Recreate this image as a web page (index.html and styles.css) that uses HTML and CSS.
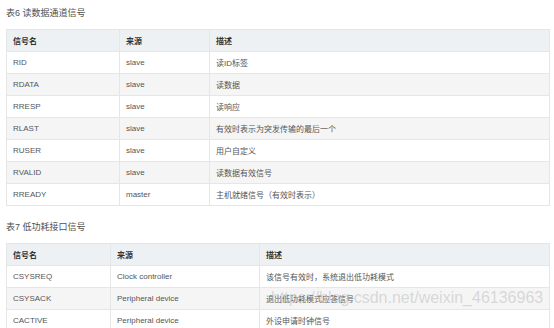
FILE: index.html
```html
<!DOCTYPE html>
<html lang="zh-CN">
<head>
  <meta charset="UTF-8" />
  <title>读数据通道信号</title>
  <link rel="stylesheet" href="styles.css">
</head>
<body>
  <p class="caption caption-first">表6 读数据通道信号</p>
  <table class="sig-table t6">
    <colgroup>
      <col class="c-name" />
      <col class="c-src" />
      <col />
    </colgroup>
    <thead>
      <tr><th>信号名</th><th>来源</th><th>描述</th></tr>
    </thead>
    <tbody>
      <tr><td>RID</td><td>slave</td><td>读ID标签</td></tr>
      <tr><td>RDATA</td><td>slave</td><td>读数据</td></tr>
      <tr><td>RRESP</td><td>slave</td><td>读响应</td></tr>
      <tr><td>RLAST</td><td>slave</td><td>有效时表示为突发传输的最后一个</td></tr>
      <tr><td>RUSER</td><td>slave</td><td>用户自定义</td></tr>
      <tr><td>RVALID</td><td>slave</td><td>读数据有效信号</td></tr>
      <tr><td>RREADY</td><td>master</td><td>主机就绪信号（有效时表示）</td></tr>
    </tbody>
  </table>

  <p class="caption">表7 低功耗接口信号</p>
  <table class="sig-table t7">
    <colgroup>
      <col class="c-name" />
      <col class="c-src" />
      <col />
    </colgroup>
    <thead>
      <tr><th>信号名</th><th>来源</th><th>描述</th></tr>
    </thead>
    <tbody>
      <tr><td>CSYSREQ</td><td>Clock controller</td><td>该信号有效时，系统退出低功耗模式</td></tr>
      <tr><td>CSYSACK</td><td>Peripheral device</td><td>退出低功耗模式应答信号</td></tr>
      <tr><td>CACTIVE</td><td>Peripheral device</td><td>外设申请时钟信号</td></tr>
    </tbody>
  </table>

  <div class="watermark">https://blog.csdn.net/weixin_46136963</div>
</body>
</html>
```

FILE: styles.css
```css
body {
  margin: 0;
  padding: 0 4px 0 6px;
  background: #fff;
  font-family: "Liberation Sans", "Noto Sans CJK SC", sans-serif;
  color: #4d4d4d;
  height: 328px;
  overflow: hidden;
  position: relative;
}

.caption {
  font-size: 9px;
  line-height: 14px;
  margin: 14px 0 9px;
  color: #4f4f4f;
}

.caption-first {
  margin-top: 6px;
}

.sig-table {
  width: 544px;
  border-collapse: collapse;
  table-layout: fixed;
  font-size: 8px;
  border: 1px solid #e6e6e6;
}

.sig-table th,
.sig-table td {
  height: 21px;
  padding: 0 6px;
  text-align: left;
  border: 1px solid #e6e6e6;
  white-space: nowrap;
  overflow: hidden;
}

.sig-table th {
  background: #eef1f4;
  color: #333;
  font-weight: bold;
}

.sig-table td {
  color: #555;
}

.sig-table tbody tr:nth-child(even) td {
  background: #f5f5f5;
}

.t6 .c-name { width: 113px; }
.t6 .c-src { width: 90px; }

.t7 .c-name { width: 104px; }
.t7 .c-src { width: 149px; }

.watermark {
  position: absolute;
  left: 271px;
  top: 289px;
  font-family: "Liberation Sans", sans-serif;
  font-size: 16px;
  color: rgba(190, 190, 190, 0.55);
  white-space: nowrap;
  pointer-events: none;
}
```
